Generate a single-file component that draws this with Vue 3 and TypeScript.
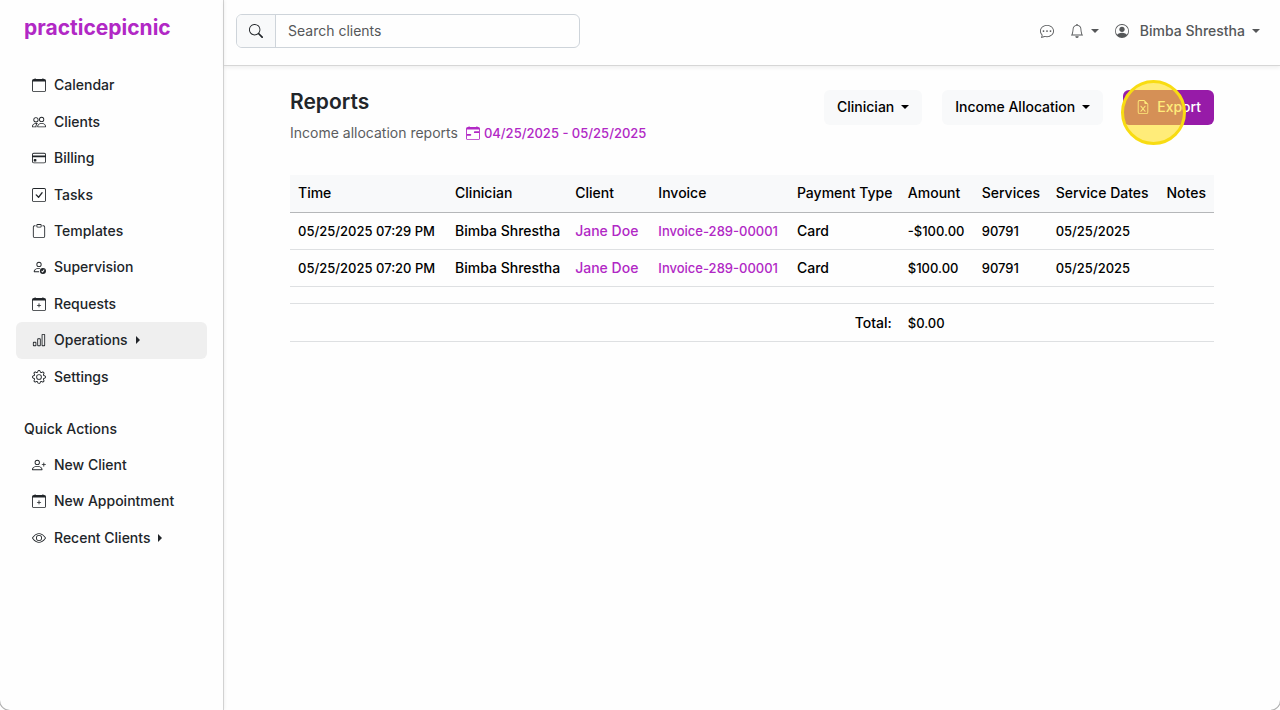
<script setup lang="ts">
import { ref } from 'vue'

interface NavItem {
  label: string
  icon: string
  active?: boolean
  caret?: boolean
}

interface Payment {
  time: string
  clinician: string
  client: string
  invoice: string
  type: string
  amount: string
  services: string
  dates: string
  notes: string
}

const calendarFrame =
  'M3.5 0a.5.5 0 0 1 .5.5V1h8V.5a.5.5 0 0 1 1 0V1h1a2 2 0 0 1 2 2v11a2 2 0 0 1-2 2H2a2 2 0 0 1-2-2V3a2 2 0 0 1 2-2h1V.5a.5.5 0 0 1 .5-.5M1 4v10a1 1 0 0 0 1 1h12a1 1 0 0 0 1-1V4z'

const icons: Record<string, string[]> = {
  calendar: [calendarFrame],
  people: [
    'M15 14s1 0 1-1-1-4-5-4-5 3-5 4 1 1 1 1zm-7.978-1L7 12.996c.001-.264.167-1.03.76-1.72C8.312 10.629 9.282 10 11 10c1.717 0 2.687.63 3.24 1.276.593.69.758 1.457.76 1.72l-.008.002-.014.002zM11 7a2 2 0 1 0 0-4 2 2 0 0 0 0 4m3-2a3 3 0 1 1-6 0 3 3 0 0 1 6 0M6.936 9.28a6 6 0 0 0-1.23-.247A7 7 0 0 0 5 9c-4 0-5 3-5 4q0 1 1 1h4.216A2.24 2.24 0 0 1 5 13c0-1.01.377-2.042 1.09-2.904.243-.294.526-.569.846-.816M4.92 10A5.5 5.5 0 0 0 4 13H1c0-.26.164-1.03.76-1.724.545-.636 1.492-1.256 3.16-1.275ZM1.5 5.5a3 3 0 1 1 6 0 3 3 0 0 1-6 0m3-2a2 2 0 1 0 0 4 2 2 0 0 0 0-4',
  ],
  card: [
    'M0 4a2 2 0 0 1 2-2h12a2 2 0 0 1 2 2v8a2 2 0 0 1-2 2H2a2 2 0 0 1-2-2zm2-1a1 1 0 0 0-1 1v1h14V4a1 1 0 0 0-1-1zm13 4H1v5a1 1 0 0 0 1 1h12a1 1 0 0 0 1-1z',
    'M2 10a1 1 0 0 1 1-1h1a1 1 0 0 1 1 1v1a1 1 0 0 1-1 1H3a1 1 0 0 1-1-1z',
  ],
  check: [
    'M14 1a1 1 0 0 1 1 1v12a1 1 0 0 1-1 1H2a1 1 0 0 1-1-1V2a1 1 0 0 1 1-1zM2 0a2 2 0 0 0-2 2v12a2 2 0 0 0 2 2h12a2 2 0 0 0 2-2V2a2 2 0 0 0-2-2z',
    'M10.97 4.97a.75.75 0 0 1 1.071 1.05l-3.992 4.99a.75.75 0 0 1-1.08.02L4.324 8.384a.75.75 0 1 1 1.06-1.06l2.094 2.093 3.473-4.425z',
  ],
  clipboard: [
    'M4 1.5H3a2 2 0 0 0-2 2V14a2 2 0 0 0 2 2h10a2 2 0 0 0 2-2V3.5a2 2 0 0 0-2-2h-1v1h1a1 1 0 0 1 1 1V14a1 1 0 0 1-1 1H3a1 1 0 0 1-1-1V3.5a1 1 0 0 1 1-1h1z',
    'M9.5 1a.5.5 0 0 1 .5.5v1a.5.5 0 0 1-.5.5h-3a.5.5 0 0 1-.5-.5v-1a.5.5 0 0 1 .5-.5zm-3-1A1.5 1.5 0 0 0 5 1.5v1A1.5 1.5 0 0 0 6.5 4h3A1.5 1.5 0 0 0 11 2.5v-1A1.5 1.5 0 0 0 9.5 0z',
  ],
  personCheck: [
    'M12.5 16a3.5 3.5 0 1 0 0-7 3.5 3.5 0 0 0 0 7m1.679-4.493-1.335 2.226a.75.75 0 0 1-1.174.144l-.774-.773a.5.5 0 0 1 .708-.708l.547.548 1.17-1.951a.5.5 0 1 1 .858.514M11 5a3 3 0 1 1-6 0 3 3 0 0 1 6 0M8 7a2 2 0 1 0 0-4 2 2 0 0 0 0 4',
    'M8.256 14a4.5 4.5 0 0 1-.229-1.004H3c.001-.246.154-.986.832-1.664C4.484 10.68 5.711 10 8 10q.39 0 .74.025c.226-.341.496-.65.804-.918Q8.844 9.002 8 9c-5 0-6 3-6 4s1 1 1 1z',
  ],
  calendarPlus: [
    'M8 7a.5.5 0 0 1 .5.5V9H10a.5.5 0 0 1 0 1H8.5v1.5a.5.5 0 0 1-1 0V10H6a.5.5 0 0 1 0-1h1.5V7.5A.5.5 0 0 1 8 7',
    calendarFrame,
  ],
  calendarRange: [
    'M9 7a1 1 0 0 1 1-1h5v2h-5a1 1 0 0 1-1-1M1 9h4a1 1 0 0 1 0 2H1z',
    calendarFrame,
  ],
  bars: [
    'M4 11H2v3h2zm5-4H7v7h2zm5-5v12h-2V2zm-2-1a1 1 0 0 0-1 1v12a1 1 0 0 0 1 1h2a1 1 0 0 0 1-1V2a1 1 0 0 0-1-1zM6 7a1 1 0 0 1 1-1h2a1 1 0 0 1 1 1v7a1 1 0 0 1-1 1H7a1 1 0 0 1-1-1zm-5 4a1 1 0 0 1 1-1h2a1 1 0 0 1 1 1v3a1 1 0 0 1-1 1H2a1 1 0 0 1-1-1z',
  ],
  gear: [
    'M8 4.754a3.246 3.246 0 1 0 0 6.492 3.246 3.246 0 0 0 0-6.492M5.754 8a2.246 2.246 0 1 1 4.492 0 2.246 2.246 0 0 1-4.492 0',
    'M9.796 1.343c-.527-1.79-3.065-1.79-3.592 0l-.094.319a.873.873 0 0 1-1.255.52l-.292-.16c-1.64-.892-3.433.902-2.54 2.541l.159.292a.873.873 0 0 1-.52 1.255l-.319.094c-1.79.527-1.79 3.065 0 3.592l.319.094a.873.873 0 0 1 .52 1.255l-.16.292c-.892 1.64.901 3.434 2.541 2.54l.292-.159a.873.873 0 0 1 1.255.52l.094.319c.527 1.79 3.065 1.79 3.592 0l.094-.319a.873.873 0 0 1 1.255-.52l.292.16c1.64.893 3.434-.902 2.54-2.541l-.159-.292a.873.873 0 0 1 .52-1.255l.319-.094c1.79-.527 1.79-3.065 0-3.592l-.319-.094a.873.873 0 0 1-.52-1.255l.16-.292c.893-1.64-.902-3.433-2.541-2.54l-.292.159a.873.873 0 0 1-1.255-.52zm-2.633.283c.246-.835 1.428-.835 1.674 0l.094.319a1.873 1.873 0 0 0 2.693 1.115l.291-.16c.764-.415 1.6.42 1.184 1.185l-.159.292a1.873 1.873 0 0 0 1.116 2.692l.318.094c.835.246.835 1.428 0 1.674l-.319.094a1.873 1.873 0 0 0-1.115 2.693l.16.291c.415.764-.42 1.6-1.185 1.184l-.291-.159a1.873 1.873 0 0 0-2.693 1.116l-.094.318c-.246.835-1.428.835-1.674 0l-.094-.319a1.873 1.873 0 0 0-2.692-1.115l-.292.16c-.764.415-1.6-.42-1.184-1.185l.159-.291A1.873 1.873 0 0 0 1.945 8.93l-.319-.094c-.835-.246-.835-1.428 0-1.674l.319-.094A1.873 1.873 0 0 0 3.06 4.377l-.16-.292c-.415-.764.42-1.6 1.185-1.184l.292.159a1.873 1.873 0 0 0 2.692-1.115z',
  ],
  personPlus: [
    'M6 8a3 3 0 1 0 0-6 3 3 0 0 0 0 6m2-3a2 2 0 1 1-4 0 2 2 0 0 1 4 0m4 8c0 1-1 1-1 1H1s-1 0-1-1 1-4 6-4 6 3 6 4m-1-.004c-.001-.246-.154-.986-.832-1.664C9.516 10.68 8.289 10 6 10s-3.516.68-4.168 1.332c-.678.678-.83 1.418-.832 1.664z',
    'M13.5 5a.5.5 0 0 1 .5.5V7h1.5a.5.5 0 0 1 0 1H14v1.5a.5.5 0 0 1-1 0V8h-1.5a.5.5 0 0 1 0-1H13V5.5a.5.5 0 0 1 .5-.5',
  ],
  eye: [
    'M16 8s-3-5.5-8-5.5S0 8 0 8s3 5.5 8 5.5S16 8 16 8M1.173 8a13 13 0 0 1 1.66-2.043C4.12 4.668 5.88 3.5 8 3.5s3.879 1.168 5.168 2.457A13 13 0 0 1 14.828 8q-.086.13-.195.288c-.335.48-.83 1.12-1.465 1.755C11.879 11.332 10.119 12.5 8 12.5s-3.879-1.168-5.168-2.457A13 13 0 0 1 1.172 8z',
    'M8 5.5a2.5 2.5 0 1 0 0 5 2.5 2.5 0 0 0 0-5M4.5 8a3.5 3.5 0 1 1 7 0 3.5 3.5 0 0 1-7 0',
  ],
  search: [
    'M11.742 10.344a6.5 6.5 0 1 0-1.397 1.398h-.001q.044.06.098.115l3.85 3.85a1 1 0 0 0 1.415-1.414l-3.85-3.85a1 1 0 0 0-.115-.1zM12 6.5a5.5 5.5 0 1 1-11 0 5.5 5.5 0 0 1 11 0',
  ],
  chat: [
    'M5 8a1 1 0 1 1-2 0 1 1 0 0 1 2 0m4 0a1 1 0 1 1-2 0 1 1 0 0 1 2 0m3 1a1 1 0 1 0 0-2 1 1 0 0 0 0 2',
    'm2.165 15.803.02-.004c1.83-.363 2.948-.842 3.468-1.105A9 9 0 0 0 8 15c4.418 0 8-3.134 8-7s-3.582-7-8-7-8 3.134-8 7c0 1.76.743 3.37 1.97 4.6a10.4 10.4 0 0 1-.524 2.318l-.003.011a11 11 0 0 1-.244.637c-.079.186.074.394.273.362a22 22 0 0 0 .693-.125m.8-3.108a1 1 0 0 0-.287-.801C1.618 10.83 1 9.468 1 8c0-3.192 3.004-6 7-6s7 2.808 7 6-3.004 6-7 6a8 8 0 0 1-2.088-.272 1 1 0 0 0-.711.074c-.387.196-1.24.57-2.634.893a11 11 0 0 0 .398-2',
  ],
  bell: [
    'M8 16a2 2 0 0 0 2-2H6a2 2 0 0 0 2 2M8 1.918l-.797.161A4 4 0 0 0 4 6c0 .628-.134 2.197-.459 3.742-.16.767-.376 1.566-.663 2.258h10.244c-.287-.692-.502-1.49-.663-2.258C12.134 8.197 12 6.628 12 6a4 4 0 0 0-3.203-3.92zM14.22 12c.223.447.481.801.78 1H1c.299-.199.557-.553.78-1C2.68 10.2 3 6.88 3 6c0-2.42 1.72-4.44 4.005-4.901a1 1 0 1 1 1.99 0A5 5 0 0 1 13 6c0 .88.32 4.2 1.22 6',
  ],
  user: [
    'M11 6a3 3 0 1 1-6 0 3 3 0 0 1 6 0',
    'M0 8a8 8 0 1 1 16 0A8 8 0 0 1 0 8m8-7a7 7 0 0 0-5.468 11.37C3.242 11.226 4.805 10 8 10s4.757 1.225 5.468 2.37A7 7 0 0 0 8 1',
  ],
  excel: [
    'M5.884 6.68a.5.5 0 1 0-.768.64L7.349 10l-2.233 2.68a.5.5 0 0 0 .768.64L8 10.781l2.116 2.54a.5.5 0 0 0 .768-.641L8.651 10l2.233-2.68a.5.5 0 0 0-.768-.64L8 9.219l-2.116-2.54z',
    'M14 14V4.5L9.5 0H4a2 2 0 0 0-2 2v12a2 2 0 0 0 2 2h8a2 2 0 0 0 2-2M9.5 3A1.5 1.5 0 0 0 11 4.5h2V14a1 1 0 0 1-1 1H4a1 1 0 0 1-1-1V2a1 1 0 0 1 1-1h5.5z',
  ],
}

const mainNav: NavItem[] = [
  { label: 'Calendar', icon: 'calendar' },
  { label: 'Clients', icon: 'people' },
  { label: 'Billing', icon: 'card' },
  { label: 'Tasks', icon: 'check' },
  { label: 'Templates', icon: 'clipboard' },
  { label: 'Supervision', icon: 'personCheck' },
  { label: 'Requests', icon: 'calendarPlus' },
  { label: 'Operations', icon: 'bars', active: true, caret: true },
  { label: 'Settings', icon: 'gear' },
]

const quickNav: NavItem[] = [
  { label: 'New Client', icon: 'personPlus' },
  { label: 'New Appointment', icon: 'calendarPlus' },
  { label: 'Recent Clients', icon: 'eye', caret: true },
]

const columns = ['Time', 'Clinician', 'Client', 'Invoice', 'Payment Type', 'Amount', 'Services', 'Service Dates', 'Notes']

const payments: Payment[] = [
  { time: '05/25/2025 07:29 PM', clinician: 'Bimba Shrestha', client: 'Jane Doe', invoice: 'Invoice-289-00001', type: 'Card', amount: '-$100.00', services: '90791', dates: '05/25/2025', notes: '' },
  { time: '05/25/2025 07:20 PM', clinician: 'Bimba Shrestha', client: 'Jane Doe', invoice: 'Invoice-289-00001', type: 'Card', amount: '$100.00', services: '90791', dates: '05/25/2025', notes: '' },
]

const query = ref('')
</script>

<template>
  <div class="app">
    <aside class="sidebar">
      <a class="brand" href="#">practicepicnic</a>
      <nav class="nav main-nav" aria-label="Main">
        <a v-for="item in mainNav" :key="item.label" class="nav-item" :class="{ active: item.active }" href="#">
          <svg class="icon" viewBox="0 0 16 16" aria-hidden="true"><path v-for="d in icons[item.icon]" :key="d" :d="d" /></svg>
          <span>{{ item.label }}</span>
          <i v-if="item.caret" class="caret-right"></i>
        </a>
      </nav>
      <h2 class="quick-title">Quick Actions</h2>
      <nav class="nav quick-nav" aria-label="Quick actions">
        <a v-for="item in quickNav" :key="item.label" class="nav-item" href="#">
          <svg class="icon" viewBox="0 0 16 16" aria-hidden="true"><path v-for="d in icons[item.icon]" :key="d" :d="d" /></svg>
          <span>{{ item.label }}</span>
          <i v-if="item.caret" class="caret-right"></i>
        </a>
      </nav>
    </aside>

    <div class="content">
      <header class="topbar">
        <form class="search" @submit.prevent>
          <label class="search-label" for="search" aria-label="Search clients">
            <svg class="icon" viewBox="0 0 16 16" aria-hidden="true"><path v-for="d in icons.search" :key="d" :d="d" /></svg>
          </label>
          <input id="search" v-model="query" class="search-input" type="text" placeholder="Search clients" />
        </form>
        <div class="tools">
          <button class="tool" type="button" aria-label="Messages">
            <svg class="icon" viewBox="0 0 16 16" aria-hidden="true"><path v-for="d in icons.chat" :key="d" :d="d" /></svg>
          </button>
          <button class="tool" type="button" aria-label="Notifications">
            <svg class="icon" viewBox="0 0 16 16" aria-hidden="true"><path v-for="d in icons.bell" :key="d" :d="d" /></svg>
            <i class="caret-down"></i>
          </button>
          <button class="tool" type="button">
            <svg class="icon" viewBox="0 0 16 16" fill-rule="evenodd" aria-hidden="true"><path v-for="d in icons.user" :key="d" :d="d" /></svg>
            <span class="account-name">Bimba Shrestha</span>
            <i class="caret-down"></i>
          </button>
        </div>
      </header>

      <main class="page">
        <div class="page-head">
          <div>
            <h1 class="title">Reports</h1>
            <p class="subtitle">
              <span>Income allocation reports</span>
              <a class="range" href="#">
                <svg class="icon" viewBox="0 0 16 16" aria-hidden="true"><path v-for="d in icons.calendarRange" :key="d" :d="d" /></svg>
                <span class="digits">04/25/2025 - 05/25/2025</span>
              </a>
            </p>
          </div>
          <div class="actions">
            <button class="btn" type="button">Clinician<i class="caret-down"></i></button>
            <button class="btn" type="button">Income Allocation<i class="caret-down"></i></button>
            <div class="export-wrap">
              <button class="btn export" type="button">
                <svg class="icon" viewBox="0 0 16 16" aria-hidden="true"><path v-for="d in icons.excel" :key="d" :d="d" /></svg>
                <span>Export</span>
              </button>
              <span class="click-marker"></span>
            </div>
          </div>
        </div>

        <table class="report">
          <colgroup>
            <col class="c-time" /><col class="c-clinician" /><col class="c-client" />
            <col class="c-invoice" /><col class="c-type" /><col class="c-amount" />
            <col class="c-services" /><col class="c-dates" /><col class="c-notes" />
          </colgroup>
          <thead>
            <tr><th v-for="c in columns" :key="c" scope="col">{{ c }}</th></tr>
          </thead>
          <tbody>
            <tr v-for="p in payments" :key="p.time">
              <td class="digits">{{ p.time }}</td>
              <td>{{ p.clinician }}</td>
              <td><a href="#">{{ p.client }}</a></td>
              <td class="digits"><a href="#">{{ p.invoice }}</a></td>
              <td>{{ p.type }}</td>
              <td class="digits">{{ p.amount }}</td>
              <td class="digits">{{ p.services }}</td>
              <td class="digits">{{ p.dates }}</td>
              <td>{{ p.notes }}</td>
            </tr>
            <tr class="spacer"><td colspan="9"></td></tr>
          </tbody>
          <tfoot>
            <tr>
              <td class="total" colspan="5">Total:</td>
              <td class="digits" colspan="4">$0.00</td>
            </tr>
          </tfoot>
        </table>
      </main>
    </div>
  </div>
</template>

<style>
body {
  margin: 0;
  background: #ffffff;
}
</style>

<style scoped>
.app {
  box-sizing: border-box;
  display: flex;
  min-height: 100vh;
  overflow: hidden;
  background: #fefefe;
  border-radius: 0 0 10px 10px;
  box-shadow: 0 0 0 1px #b0b0b0;
  color: #212529;
  font-family: Inter, "Liberation Sans", sans-serif;
  font-size: 14px;
  font-weight: 500;
  line-height: 20px;
}
.app * {
  box-sizing: border-box;
}
a {
  color: #b128c5;
  text-decoration: none;
}
button,
input {
  font: inherit;
}
.digits {
  font-size: 13px;
}
.icon {
  flex: none;
  width: 14px;
  height: 14px;
  fill: currentColor;
}
.caret-down {
  flex: none;
  border-top: 4px solid currentColor;
  border-left: 4px solid transparent;
  border-right: 4px solid transparent;
}
.caret-right {
  flex: none;
  border-left: 4px solid currentColor;
  border-top: 4px solid transparent;
  border-bottom: 4px solid transparent;
}

.sidebar {
  flex: none;
  width: 224px;
  padding: 12px 16px;
  border-right: 1px solid #d2d2d2;
  box-shadow: 0 0 4px rgba(0, 0, 0, 0.08);
}
.brand {
  display: block;
  margin-bottom: 23px;
  padding-left: 8px;
  font-size: 21px;
  font-weight: 700;
  line-height: 32px;
}
.nav {
  display: grid;
  grid-auto-rows: 1fr;
}
.main-nav {
  height: 328px;
}
.quick-nav {
  height: 109px;
}
.nav-item {
  display: flex;
  align-items: center;
  gap: 8px;
  padding: 0 16px;
  border-radius: 6px;
  color: #212529;
}
.nav-item.active {
  background: #efefef;
}
.quick-title {
  margin: 24px 0 8px;
  padding-left: 8px;
  font-size: 14px;
  font-weight: 500;
  line-height: 20px;
}

.content {
  flex: 1;
  min-width: 0;
}
.topbar {
  display: flex;
  align-items: center;
  justify-content: space-between;
  padding: 14px 20px 17px 12px;
  border-bottom: 1px solid #d6d6d6;
  box-shadow: 0 2px 4px rgba(0, 0, 0, 0.06);
}
.search {
  display: flex;
  width: 344px;
  height: 34px;
  border: 1px solid #ced4da;
  border-radius: 6px;
  overflow: hidden;
}
.search-label {
  display: flex;
  align-items: center;
  padding: 0 12px;
  background: #f8f9fa;
  border-right: 1px solid #ced4da;
}
.search-input {
  flex: 1;
  min-width: 0;
  padding: 0 12px;
  border: 0;
  outline: 0;
  background: transparent;
  color: #212529;
  font-weight: 400;
}
.search-input::placeholder {
  color: #555759;
  opacity: 1;
}
.tools {
  display: flex;
  align-items: center;
  gap: 16px;
}
.tool {
  display: flex;
  align-items: center;
  gap: 7px;
  padding: 0;
  border: 0;
  background: transparent;
  color: #555759;
}
.account-name {
  padding-left: 4px;
}

.page {
  padding: 24px 66px;
}
.page-head {
  display: flex;
  align-items: flex-start;
  justify-content: space-between;
  margin-bottom: 32px;
}
.title {
  margin: 0 0 9px;
  font-size: 21px;
  font-weight: 600;
  line-height: 24px;
}
.subtitle {
  display: flex;
  gap: 8px;
  margin: 0;
  color: #5b5d5f;
  font-weight: 400;
}
.range {
  display: flex;
  align-items: center;
  gap: 4px;
  font-weight: 500;
}
.actions {
  display: flex;
  gap: 20px;
}
.btn {
  display: flex;
  align-items: center;
  gap: 7px;
  height: 35px;
  padding: 0 13px 1px;
  border: 0;
  border-radius: 6px;
  background: #f8f9fa;
  color: #000000;
}
.export {
  background: #971ba8;
  color: #ffffff;
}
.export-wrap {
  position: relative;
}
.click-marker {
  position: absolute;
  top: -10px;
  left: -2px;
  width: 65px;
  height: 65px;
  border: 3px solid #f8dc12;
  border-radius: 50%;
  background: rgba(255, 224, 32, 0.6);
  pointer-events: none;
}

.report {
  width: 100%;
  border-collapse: collapse;
  table-layout: fixed;
  color: #000000;
}
.report th,
.report td {
  padding: 8px;
  border-bottom: 1px solid #dee0e2;
  font-weight: 500;
  text-align: left;
  white-space: nowrap;
}
.report th {
  padding-bottom: 9px;
  background: #f8f9fa;
  border-bottom-color: #b5b7b9;
}
.report .spacer td {
  height: 17px;
  padding: 0;
}
.report tfoot td {
  padding: 9px 8px 8px;
}
.report .total {
  text-align: right;
}
.c-time { width: 17%; }
.c-clinician { width: 13%; }
.c-client { width: 9%; }
.c-invoice { width: 15%; }
.c-type { width: 12%; }
.c-amount { width: 8%; }
.c-services { width: 8%; }
.c-dates { width: 12%; }
.c-notes { width: 6%; }
</style>
